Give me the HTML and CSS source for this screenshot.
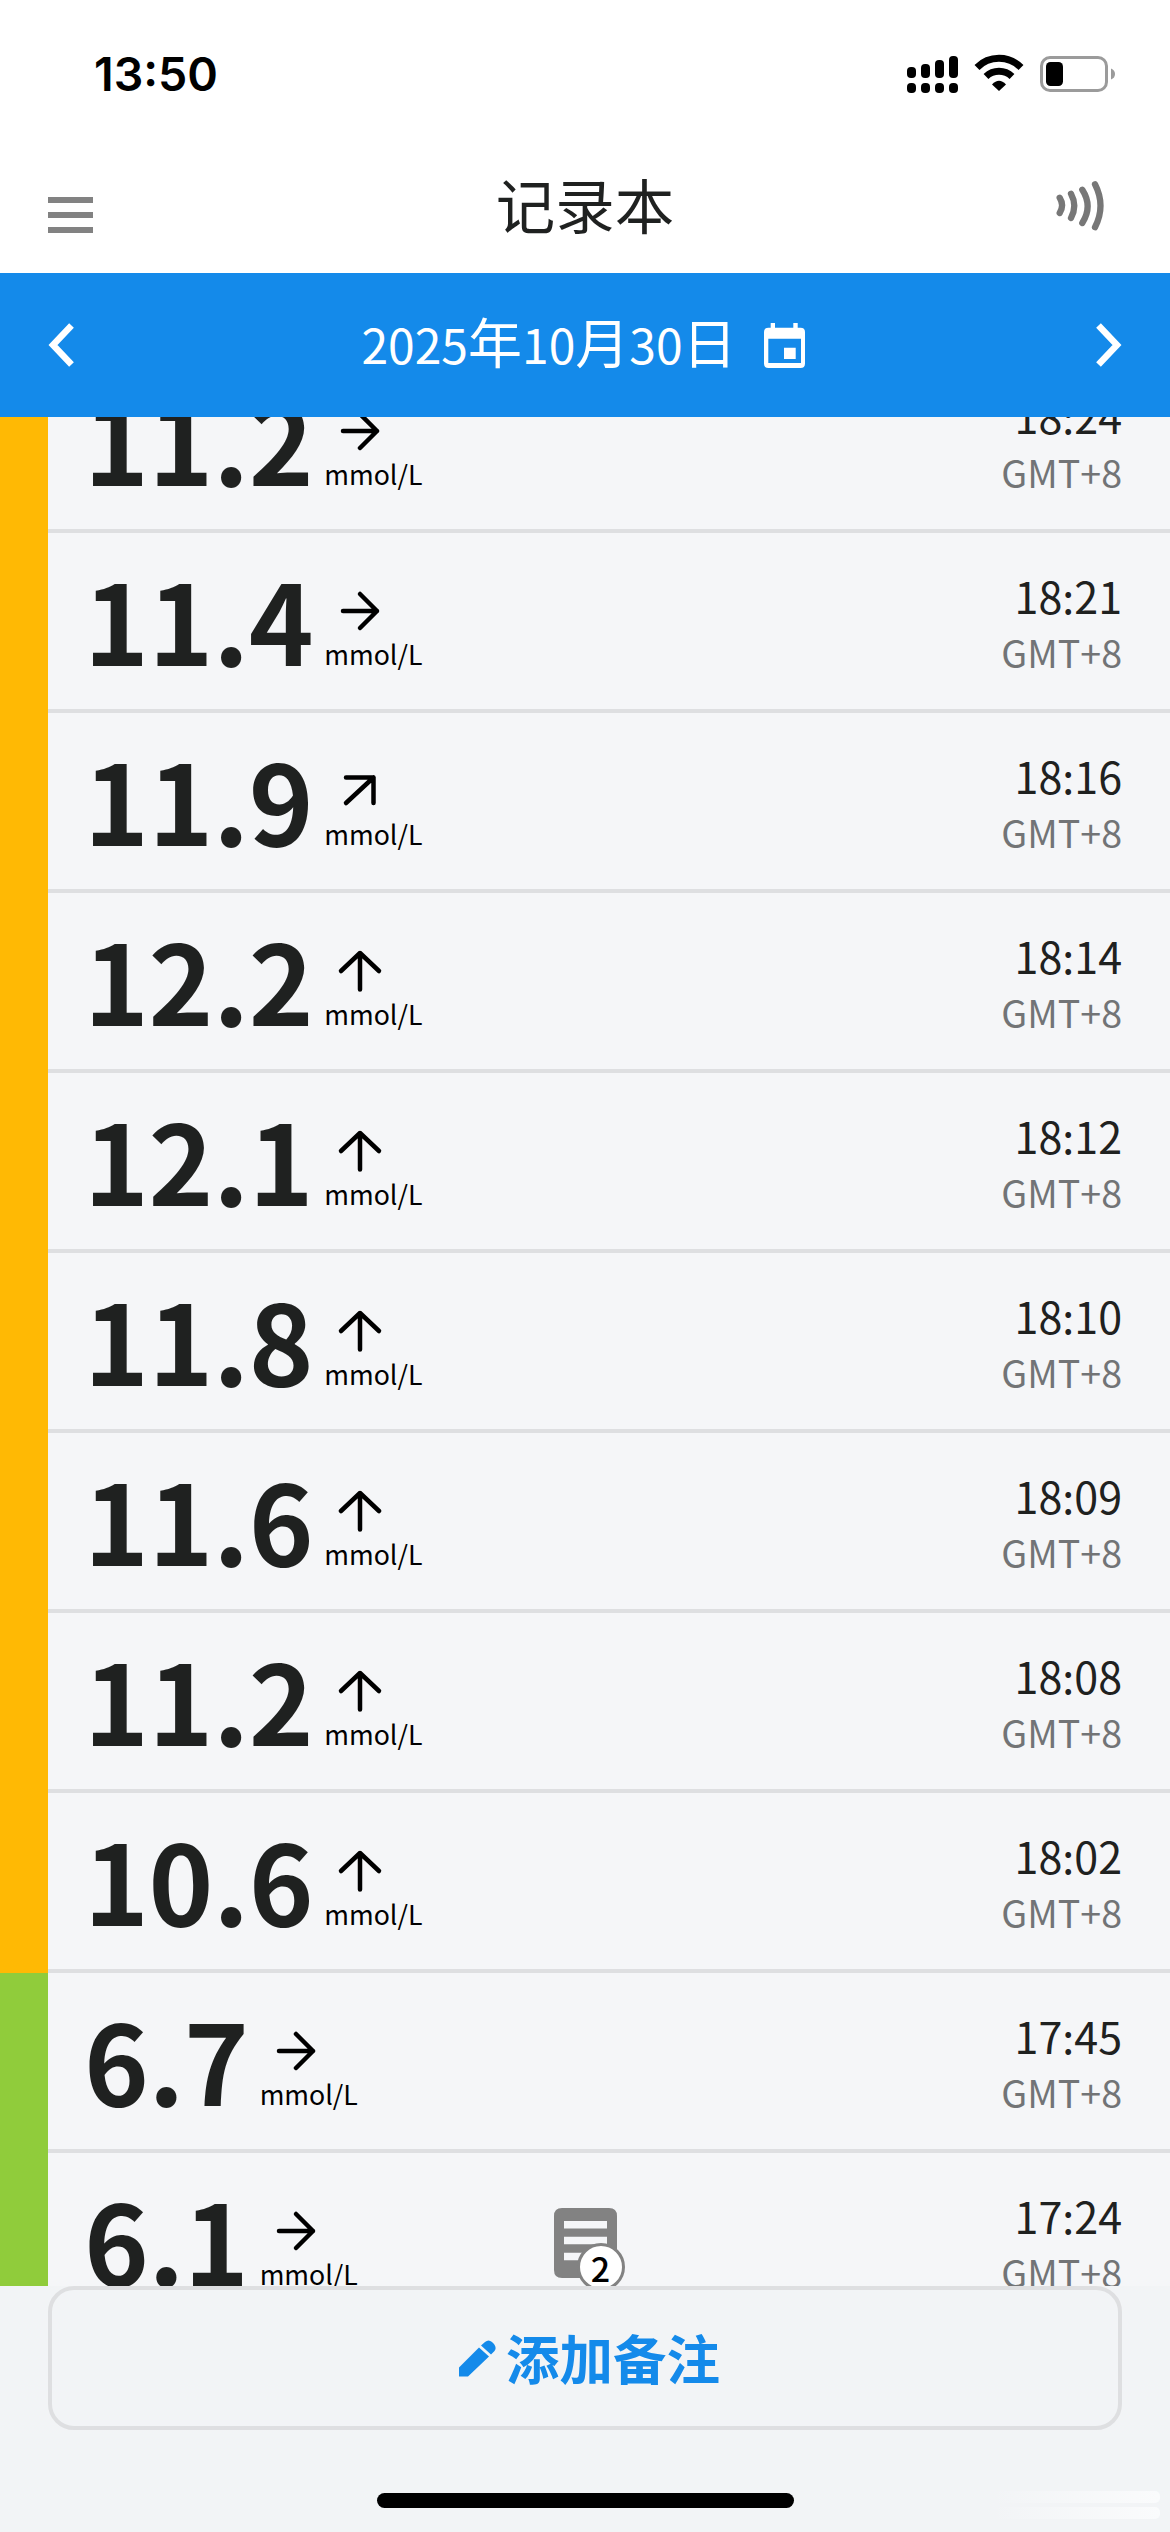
FILE: index.html
```html
<!DOCTYPE html>
<html lang="zh-CN">
<head>
<meta charset="utf-8">
<title>记录本</title>
<link rel="stylesheet" href="styles.css">
</head>
<body>
<svg class="defs" width="0" height="0">
  <symbol id="flat" viewBox="0 0 48 48"><path d="M7 24H41M24 7L41 24L24 41"/></symbol>
  <symbol id="rise" viewBox="0 0 48 48"><path d="M10 10.500H37.500V36M10 36L37.500 10.500"/></symbol>
  <symbol id="up" viewBox="0 0 48 48"><path d="M24 42.500V6M5 24L24 6L43 24"/></symbol>
</svg>
<div class="screen">
  <div class="status">
    <span class="clock">13:50</span>
    <svg class="status-icons" width="210" height="40" viewBox="0 0 210 40">
      <rect x="0" y="13" width="9" height="11" rx="4"/><rect x="14" y="10" width="9" height="14" rx="4"/><rect x="28" y="6" width="9" height="18" rx="4"/><rect x="42" y="2" width="9" height="22" rx="4"/>
      <rect x="0" y="29" width="9" height="10" rx="4"/><rect x="14" y="29" width="9" height="10" rx="4"/><rect x="28" y="29" width="9" height="10" rx="4"/><rect x="42" y="29" width="9" height="10" rx="4"/>
      <path d="M70 13.500A31 31 0 0 1 114 13.500" fill="none" stroke="#000" stroke-width="7"/>
      <path d="M79 22.500A19 19 0 0 1 105 22.500" fill="none" stroke="#000" stroke-width="7"/>
      <path d="M85 30.500Q92 23 99 30.500L92 37Z"/>
      <rect x="134.500" y="3.500" width="65" height="33" rx="8.500" fill="none" stroke="#9b9b9b" stroke-width="3"/>
      <rect x="139" y="8" width="17" height="24" rx="4.500"/>
      <path d="M204 14.500Q208 16 208 20T204 25.500Z" fill="#9b9b9b"/>
    </svg>
  </div>
  <header class="header">
    <div class="side"><svg class="menu" width="45" height="36" viewBox="0 0 45 36"><path d="M0 3H45M0 18H45M0 33H45"/></svg></div>
    <h1>记录本</h1>
    <div class="side end"><svg class="scan" width="48" height="51" viewBox="0 0 48 51"><path d="M3.700 17.700Q8.500 25.300 3.700 33M15 13.700Q21.600 25.800 15 38M26.300 9.700Q37 26.300 26.300 43M39 4.300Q50 25.800 39 47.300"/></svg></div>
  </header>
  <nav class="datebar">
    <svg width="26" height="44" viewBox="0 0 26 44"><path d="M23.500 2.500L5 22L23.500 41.500"/></svg>
    <div class="date"><span class="day">2025<i>年</i>10<i>月</i>30<i>日</i></span>
      <svg class="cal" width="41" height="45" viewBox="0 0 41 45"><path fill-rule="evenodd" d="M6.700 0H11V4.700H29.300V0H33.700V4.700H36.500Q41 4.700 41 9V40.500Q41 45 36.500 45H4.500Q0 45 0 40.500V9Q0 4.700 4.500 4.700H6.700ZM4.300 15.700V40H37V15.700ZM20 24.700H31.700V36H20Z"/></svg>
    </div>
    <svg width="26" height="44" viewBox="0 0 26 44"><path d="M2.500 2.500L21 22L2.500 41.500"/></svg>
  </nav>
  <main class="list"><div class="rows">
    <div class="row high"><b>11.2</b><div class="trend"><svg><use href="#flat"/></svg><span>mmol/L</span></div><div class="when"><time>18:24</time><span>GMT+8</span></div></div>
    <div class="row high"><b>11.4</b><div class="trend"><svg><use href="#flat"/></svg><span>mmol/L</span></div><div class="when"><time>18:21</time><span>GMT+8</span></div></div>
    <div class="row high"><b>11.9</b><div class="trend"><svg><use href="#rise"/></svg><span>mmol/L</span></div><div class="when"><time>18:16</time><span>GMT+8</span></div></div>
    <div class="row high"><b>12.2</b><div class="trend"><svg><use href="#up"/></svg><span>mmol/L</span></div><div class="when"><time>18:14</time><span>GMT+8</span></div></div>
    <div class="row high"><b>12.1</b><div class="trend"><svg><use href="#up"/></svg><span>mmol/L</span></div><div class="when"><time>18:12</time><span>GMT+8</span></div></div>
    <div class="row high"><b>11.8</b><div class="trend"><svg><use href="#up"/></svg><span>mmol/L</span></div><div class="when"><time>18:10</time><span>GMT+8</span></div></div>
    <div class="row high"><b>11.6</b><div class="trend"><svg><use href="#up"/></svg><span>mmol/L</span></div><div class="when"><time>18:09</time><span>GMT+8</span></div></div>
    <div class="row high"><b>11.2</b><div class="trend"><svg><use href="#up"/></svg><span>mmol/L</span></div><div class="when"><time>18:08</time><span>GMT+8</span></div></div>
    <div class="row high"><b>10.6</b><div class="trend"><svg><use href="#up"/></svg><span>mmol/L</span></div><div class="when"><time>18:02</time><span>GMT+8</span></div></div>
    <div class="row ok"><b>6.7</b><div class="trend"><svg><use href="#flat"/></svg><span>mmol/L</span></div><div class="when"><time>17:45</time><span>GMT+8</span></div></div>
    <div class="row ok"><b>6.1</b><div class="trend"><svg><use href="#flat"/></svg><span>mmol/L</span></div>
      <div class="note"><svg width="63" height="70" viewBox="0 0 63 70"><path fill="#828282" fill-rule="evenodd" d="M8 0H55Q63 0 63 8V62Q63 70 55 70H8Q0 70 0 62V8Q0 0 8 0ZM10 13V20.500H53V13ZM10 28.700V36.200H53V28.700ZM10 44.700V52.300H53V44.700Z"/></svg><span class="count">2</span></div>
      <div class="when"><time>17:24</time><span>GMT+8</span></div></div>
  </div></main>
  <footer class="footer">
    <button class="add"><svg width="37" height="37" viewBox="0 0 37 37"><path d="M0 27.500L20 7.500L30 16.500L9 36.500H0ZM22 5.500L26 2Q29.500 -1 33 2L35 4Q38 8 35.500 11L32 14.500Z"/></svg><span>添加备注</span></button>
    <div class="home"></div>
    <div class="smudge"><i></i><i></i></div>
  </footer>
</div>
</body>
</html>
```
FILE: styles.css
```css
* { box-sizing: border-box; }
body { margin: 0; font-family: "Noto Sans CJK SC", sans-serif; color: #1f2120; }
svg { display: block; flex: none; }
.defs { position: absolute; }
.screen { width: 1170px; height: 2532px; display: flex; flex-direction: column; background: #fff; overflow: hidden; }

.status { height: 150px; padding: 54px 53px 0 94px; display: flex; justify-content: space-between; align-items: flex-start; }
.clock { font: 600 46.5px/40px Inter, sans-serif; color: #000; }

.header { height: 123px; padding: 0 48px; display: grid; grid-template-columns: 1fr auto 1fr; align-items: center; }
.end { display: flex; justify-content: flex-end; padding-right: 18px; }
.menu { margin-top: 7px; }
.menu path { stroke: #828282; stroke-width: 6; }
.header h1 { margin: -17px 0 0; font-size: 59.5px; font-weight: 400; line-height: 80px; }
.scan { margin-top: -12px; }
.scan path { fill: none; stroke: #777; stroke-width: 6.3; stroke-linecap: round; }

.datebar { height: 144px; flex: none; padding: 0 48px; display: flex; justify-content: space-between; align-items: center; background: #148aea; color: #fff; }
.datebar path { fill: none; stroke: #fff; stroke-width: 6.5; }
.datebar .cal path { fill: #fff; stroke: none; }
.date { display: flex; align-items: center; gap: 27px; margin-right: 4px; font-size: 48px; line-height: 70px; }
.day { margin-top: -6px; }
.day i { font-style: normal; font-size: 54px; }

.list { height: 1869px; flex: none; overflow: hidden; background: #f5f6f8; }
.rows { margin-top: -64px; }
.row { height: 180px; display: flex; border-left: 48px solid #ffb904; position: relative; padding: 0 48px 0 36px; background: linear-gradient(#dedfe1, #dedfe1) bottom / 100% 4px no-repeat; }
.ok { border-color: #90cc3b; }
.row b { font-size: 110px; line-height: 110px; letter-spacing: -0.3px; padding-top: 30px; }
.trend { padding: 54px 0 0 11px; }
.trend svg { width: 48px; height: 48px; margin-left: 12px; fill: none; stroke: #000; stroke-width: 4.5; stroke-linecap: round; stroke-linejoin: round; }
.trend span { display: block; font-size: 26.7px; line-height: 37px; color: #000; }
.when { margin-left: auto; text-align: right; padding-top: 35px; }
.when time { display: block; font-size: 43px; line-height: 54px; }
.when span { display: block; font-size: 37.6px; line-height: 60px; color: #727476; }
.note { position: absolute; left: 506px; top: 55px; }
.count { position: absolute; left: 22.5px; top: 35px; width: 48px; height: 48px; border: 3px solid #828282; border-radius: 50%; background: #fff; color: #000; font-size: 34px; font-weight: 500; line-height: 43px; text-align: center; }

.footer { flex: 1; background: #f2f4f6; padding: 0 48px; position: relative; display: flex; flex-direction: column; align-items: center; }
.add { width: 100%; height: 144px; border: 4px solid #dedfe1; border-radius: 26px; background: none; display: flex; justify-content: center; align-items: center; gap: 10px; padding: 0 0 0 9px; color: #148aea; font: 700 53.5px/80px "Noto Sans CJK SC", sans-serif; }
.add span { margin-top: -3px; }
.add path { fill: #148aea; }
.home { width: 417px; height: 15px; margin-top: 63px; border-radius: 8px; background: #000; }
.smudge { position: absolute; right: 10px; bottom: 13px; width: 170px; display: grid; gap: 4px; }
.smudge i { height: 12px; border-radius: 0 5px 5px 0; background: linear-gradient(90deg, transparent, #fafbfc); }
```
